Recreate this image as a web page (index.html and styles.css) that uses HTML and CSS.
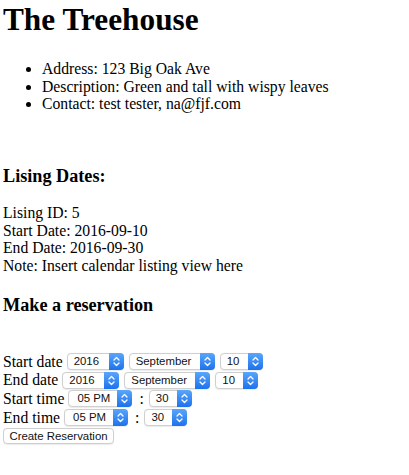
FILE: index.html
```html
<!DOCTYPE html>
<html>
<head>
<meta charset="utf-8">
<link rel="stylesheet" href="styles.css">
</head>
<body>
<h1 class="title">The Treehouse</h1>
<ul class="info">
  <li>Address: 123 Big Oak Ave</li>
  <li>Description: Green and tall with wispy leaves</li>
  <li>Contact: test tester, na@fjf.com</li>
</ul>
<h3 class="sub sub-dates">Lising Dates:</h3>
<div class="dates">
  <div>Lising ID: 5</div>
  <div>Start Date: 2016-09-10</div>
  <div>End Date: 2016-09-30</div>
  <div>Note: Insert calendar listing view here</div>
</div>
<h3 class="sub sub-res">Make a reservation</h3>
<form class="form">
  <div class="row">
    <span class="lbl">Start date</span>
    <span class="sel w-year"><span class="val">2016</span><span class="arr"><svg width="15" height="17" viewBox="0 0 15 17"><polyline points="5,7 7.5,4.5 10,7" /><polyline points="5,10 7.5,12.5 10,10" /></svg></span></span>
    <span class="sel w-month"><span class="val">September</span><span class="arr"><svg width="15" height="17" viewBox="0 0 15 17"><polyline points="5,7 7.5,4.5 10,7" /><polyline points="5,10 7.5,12.5 10,10" /></svg></span></span>
    <span class="sel w-day"><span class="val">10</span><span class="arr"><svg width="15" height="17" viewBox="0 0 15 17"><polyline points="5,7 7.5,4.5 10,7" /><polyline points="5,10 7.5,12.5 10,10" /></svg></span></span>
  </div>
  <div class="row">
    <span class="lbl">End date</span>
    <span class="sel w-year"><span class="val">2016</span><span class="arr"><svg width="15" height="17" viewBox="0 0 15 17"><polyline points="5,7 7.5,4.5 10,7" /><polyline points="5,10 7.5,12.5 10,10" /></svg></span></span>
    <span class="sel w-month"><span class="val">September</span><span class="arr"><svg width="15" height="17" viewBox="0 0 15 17"><polyline points="5,7 7.5,4.5 10,7" /><polyline points="5,10 7.5,12.5 10,10" /></svg></span></span>
    <span class="sel w-day"><span class="val">10</span><span class="arr"><svg width="15" height="17" viewBox="0 0 15 17"><polyline points="5,7 7.5,4.5 10,7" /><polyline points="5,10 7.5,12.5 10,10" /></svg></span></span>
  </div>
  <div class="row">
    <span class="lbl">Start time</span>
    <span class="sel w-hour"><span class="val">05 PM</span><span class="arr"><svg width="15" height="17" viewBox="0 0 15 17"><polyline points="5,7 7.5,4.5 10,7" /><polyline points="5,10 7.5,12.5 10,10" /></svg></span></span>
    <span class="colon">:</span>
    <span class="sel w-min"><span class="val">30</span><span class="arr"><svg width="15" height="17" viewBox="0 0 15 17"><polyline points="5,7 7.5,4.5 10,7" /><polyline points="5,10 7.5,12.5 10,10" /></svg></span></span>
  </div>
  <div class="row">
    <span class="lbl">End time</span>
    <span class="sel w-hour"><span class="val">05 PM</span><span class="arr"><svg width="15" height="17" viewBox="0 0 15 17"><polyline points="5,7 7.5,4.5 10,7" /><polyline points="5,10 7.5,12.5 10,10" /></svg></span></span>
    <span class="colon">:</span>
    <span class="sel w-min"><span class="val">30</span><span class="arr"><svg width="15" height="17" viewBox="0 0 15 17"><polyline points="5,7 7.5,4.5 10,7" /><polyline points="5,10 7.5,12.5 10,10" /></svg></span></span>
  </div>
  <div class="row">
    <span class="btn">Create Reservation</span>
  </div>
</form>
</body>
</html>
```
FILE: styles.css
```css
html, body {
  background: #fff;
}
body {
  margin: 0 0 0 3px;
  font-family: "Liberation Serif", "Times New Roman", serif;
  font-size: 15.7px;
  line-height: 17.5px;
  color: #000;
}
.title {
  font-size: 31.3px;
  line-height: 37px;
  margin: 1px 0 0 0;
  font-weight: bold;
}
.info {
  margin: 22px 0 0 0;
  padding-left: 39px;
}
.sub {
  font-size: 18.2px;
  line-height: 21px;
  font-weight: bold;
  margin: 0;
}
.sub-dates {
  margin-top: 53px;
}
.dates {
  margin-top: 17.6px;
}
.sub-res {
  margin-top: 20.8px;
}
.form {
  margin: 36px 0 0 0;
}
.row {
  display: flex;
  align-items: center;
  height: 18.75px;
}
.lbl {
  margin-right: 4px;
}
.sel {
  display: inline-flex;
  box-sizing: border-box;
  height: 17px;
  border: 1px solid #cfcfcf;
  border-radius: 4px;
  background: #fff;
  margin-right: 5px;
  font-family: "Liberation Sans", Arial, sans-serif;
  font-size: 11.4px;
  color: #111;
  box-shadow: 0 0.5px 1px rgba(0,0,0,0.08);
}
.val {
  flex: 1;
  padding-left: 6px;
  line-height: 15px;
  white-space: nowrap;
}
.arr {
  width: 15px;
  margin: -1px -1px -1px 0;
  border-radius: 0 4px 4px 0;
  background: linear-gradient(#5aa6fa, #1c72ee);
  display: flex;
}
.arr svg {
  display: block;
}
.arr polyline {
  fill: none;
  stroke: #fff;
  stroke-width: 1.3;
  stroke-linecap: round;
  stroke-linejoin: round;
}
.w-year { width: 57px; }
.w-month { width: 86px; }
.w-day { width: 43px; }
.w-hour { width: 64px; }
.w-min { width: 43px; }
.w-hour .val { padding-left: 8px; }
.colon {
  margin: 0 5px 0 2px;
}
.btn {
  display: inline-flex;
  align-items: center;
  justify-content: center;
  box-sizing: border-box;
  width: 111px;
  height: 16px;
  border: 1px solid #cfcfcf;
  border-radius: 4px;
  background: #fff;
  font-family: "Liberation Sans", Arial, sans-serif;
  font-size: 11.4px;
  color: #111;
  box-shadow: 0 0.5px 1px rgba(0,0,0,0.08);
}
```
